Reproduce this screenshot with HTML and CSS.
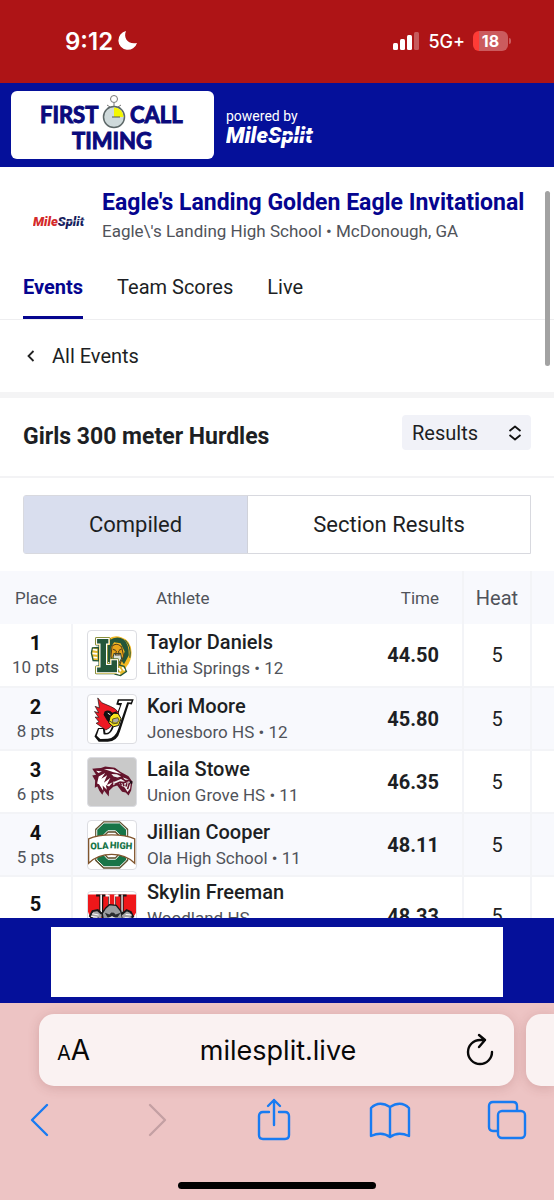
FILE: index.html
```html
<!DOCTYPE html>
<html lang="en">
<head>
    <meta charset="UTF-8">
    <meta name="viewport" content="width=device-width, initial-scale=1.0">
    <title>Eagle's Landing Golden Eagle Invitational</title>
    <link rel="stylesheet" href="styles.css">
</head>
<body>
    <div class="status-bar">
        <div class="status-left">
            <span class="clock">9:12</span>
            <svg width="20" height="20" viewBox="0 0 20 20"><path d="M8 0C5 7 10 14 19 12A9.500 9.500 0 1 1 8 0Z" fill="#fff"/></svg>
        </div>
        <div class="status-right">
            <svg width="27" height="20" viewBox="0 0 27 20" fill="#fff">
                <rect x="0" y="12" width="5" height="7" rx="1.500"/>
                <rect x="7" y="8" width="5" height="11" rx="1.500"/>
                <rect x="14" y="4" width="5" height="15" rx="1.500"/>
                <rect x="21" y="1" width="5" height="18" rx="1.500" opacity=".3"/>
            </svg>
            <span class="network">5G+</span>
            <span class="battery">18</span>
        </div>
    </div>

    <header class="site-header">
        <div class="timer-logo">
            <svg width="150" height="60" viewBox="0 0 150 60">
                <g class="timer-text">
                    <text x="2" y="28">FIRST</text>
                    <text x="92" y="28">CALL</text>
                    <text x="34" y="54">TIMING</text>
                </g>
                <g fill="none" stroke="#777" stroke-width="1">
                    <circle cx="76" cy="4" r="3.500"/>
                    <path d="M76 8v4M70 12l2 3M82 12l-2 3M69 10l3 2M83 10l-3 2"/>
                </g>
                <circle cx="76" cy="22" r="10.500" fill="#cfdadb" stroke="#5d6868" stroke-width="1.500"/>
                <path d="M76 22V12.500A9.500 9.500 0 0 1 85.500 22Z" fill="#f4f700"/>
                <path d="M74 22h8" stroke="#555" stroke-width="1"/>
            </svg>
        </div>
        <div class="powered">
            <span>powered by</span>
            <svg width="96" height="26" viewBox="0 0 96 26">
                <text class="ms-text" x="0" y="18">MileSplit</text>
                <path d="M40 12L88 10" stroke="#05109a" stroke-width="1.500"/>
            </svg>
        </div>
    </header>

    <main class="content">
        <div class="meet">
            <svg class="meet-logo" width="55" height="24" viewBox="0 0 55 24">
                <text class="ms-small" x="0" y="17"><tspan fill="#d42a2a">Mile</tspan><tspan fill="#141c5c">Split</tspan></text>
                <path d="M26 13L53 11" stroke="#fff" stroke-width=".7"/>
            </svg>
            <div>
                <h1>Eagle's Landing Golden Eagle Invitational</h1>
                <p>Eagle\'s Landing High School • McDonough, GA</p>
            </div>
        </div>

        <nav class="tabs">
            <a class="active" href="#events">Events</a>
            <a href="#scores">Team Scores</a>
            <a href="#live">Live</a>
        </nav>

        <a class="all-events" href="#events">
            <svg width="8" height="14" viewBox="0 0 8 14"><path d="M6.500 2L1.500 7l5 5" fill="none" stroke="#222" stroke-width="1.800"/></svg>
            All Events
        </a>

        <div class="event-head">
            <h2>Girls 300 meter Hurdles</h2>
            <div class="select-box">
                <select aria-label="View">
                    <option>Results</option>
                </select>
                <svg width="14" height="16" viewBox="0 0 14 16"><path d="M1.500 6L7 1.500 12.500 6M1.500 10L7 14.500 12.500 10" fill="none" stroke="#111" stroke-width="1.800" stroke-linejoin="round"/></svg>
            </div>
        </div>

        <div class="segmented">
            <button type="button" class="selected">Compiled</button>
            <button type="button">Section Results</button>
        </div>

        <table class="results">
            <colgroup>
                <col class="col-place">
                <col>
                <col class="col-time">
                <col class="col-heat">
                <col class="col-more">
            </colgroup>
            <thead>
                <tr>
                    <th>Place</th>
                    <th class="athlete-head">Athlete</th>
                    <th class="time-head">Time</th>
                    <th class="heat-head">Heat</th>
                    <th></th>
                </tr>
            </thead>
            <tbody>
                <tr>
                    <td class="place"><b>1</b><span>10 pts</span></td>
                    <td>
                        <div class="athlete">
                            <svg class="team-logo" viewBox="6 0 140 140">
                                <path d="M64 24Q82 10 103 18Q132 26 133 62Q133 88 118 104L112 120L88 128L76 112Z" fill="#f5b922"/>
                                <path d="M68 27Q91 12 111 25Q126 40 125 71L111 97L104 87L113 60L101 36L82 33L73 48L71 92L62 90V36Z" fill="#24563a"/>
                                <path d="M115 27Q133 46 128 78" fill="none" stroke="#24563a" stroke-width="3"/>
                                <path d="M76 44Q90 32 104 46L110 73L98 99H80L73 74Z" fill="#e9a51b" stroke="#59401b" stroke-width="3"/>
                                <path d="M82 66H101L104 80L96 94L84 91L79 76Z" fill="#dce1d7" stroke="#384a32" stroke-width="3"/>
                                <path d="M79 53L87 57M104 52L96 57M89 58L86 70H97L95 58" fill="none" stroke="#59401b" stroke-width="3"/>
                                <path d="M36 48L19 49L16 64L21 86L37 87ZM76 112L93 98L111 103L118 118L101 130L85 126Z" fill="#e7b92b" stroke="#24563a" stroke-width="4"/>
                                <path d="M31 22H67V38H60V98H73V84H92V122H31V105H41V38H31Z" fill="#24563a" stroke="#24563a" stroke-width="9" stroke-linejoin="round"/>
                                <path d="M31 22H67V38H60V98H73V84H92V122H31V105H41V38H31Z" fill="#24563a" stroke="#f4c93c" stroke-width="6"/>
                                <path d="M31 22H67V38H60V98H73V84H92V122H31V105H41V38H31Z" fill="#24563a" stroke="#fff" stroke-width="3"/>
                                <path d="M20 54l13 2M19 65l14 2M22 77l11 1M95 108l7 9M106 106l7 9M90 122l10 3" stroke="#fff" stroke-width="5"/>
                            </svg>
                            <div class="info"><strong>Taylor Daniels</strong><span>Lithia Springs • 12</span></div>
                        </div>
                    </td>
                    <td class="time">44.50</td>
                    <td class="heat">5</td>
                    <td></td>
                </tr>
                <tr>
                    <td class="place"><b>2</b><span>8 pts</span></td>
                    <td>
                        <div class="athlete">
                            <svg class="team-logo" viewBox="0 0 148 148">
                                <path d="M92 13H141L135 29L126 28L99 111Q91 143 61 144H33L20 128L31 102H51L54 117Q66 118 71 104L99 32L87 29Z" fill="#111"/>
                                <path d="M96 18H135L132 23L121 22L93 105Q84 133 61 135L38 136L27 126L34 105H46L48 121Q68 126 77 104L105 25L94 25Z" fill="#fff"/>
                                <path d="M30 9L43 24L69 35Q87 42 94 55L92 77L65 102L55 108L42 99L25 87L34 83L22 68L33 69L20 51L33 55L22 35L35 40Z" fill="#ed1923" stroke="#111" stroke-width="2"/>
                                <path d="M51 51Q65 43 75 55L88 50L91 65L79 76L70 90L58 78L48 61Z" fill="#111"/>
                                <path d="M68 67L80 56L93 57L102 73L94 94L78 98L64 86Z" fill="#f7e31d" stroke="#111" stroke-width="3"/>
                                <path d="M76 74l16-4 4 9-9 8-11-1zM67 80l12 9 14-3" fill="#aaa" stroke="#615a17" stroke-width="3"/>
                                <path d="M61 56l8 5" stroke="#fff" stroke-width="3"/>
                            </svg>
                            <div class="info"><strong>Kori Moore</strong><span>Jonesboro HS • 12</span></div>
                        </div>
                    </td>
                    <td class="time">45.80</td>
                    <td class="heat">5</td>
                    <td></td>
                </tr>
                <tr>
                    <td class="place"><b>3</b><span>6 pts</span></td>
                    <td>
                        <div class="athlete">
                            <svg class="team-logo gray" viewBox="0 0 148 148">
                                <path d="M13 33Q28 32 40 31L53 26L83 30L101 43L125 56L137 73L133 100L125 116L116 106L105 104L90 85L78 89L65 101L64 119L50 101L44 113L35 101L29 88L21 92L22 69L13 54L25 52Z" fill="#64142c"/>
                                <path d="M25 39L43 42L32 46ZM49 34L78 35L103 49L79 44ZM33 57L53 46L41 64L59 53L49 76L69 61L58 83L76 75L65 88L55 83L58 98L45 85L47 101L34 81L28 79Z" fill="#fff"/>
                                <path d="M72 49L89 50L102 57L91 60L79 57ZM108 60L126 66L113 68ZM78 73L98 62L115 69L132 74L130 94L122 105L113 91L101 85L95 77L78 84Z" fill="#eee"/>
                                <path d="M80 71L102 62L120 73L110 76L99 74L82 82M99 76L103 85M108 77L111 87M120 78L117 88M128 76L122 96" fill="none" stroke="#64142c" stroke-width="5"/>
                                <path d="M129 69l8 3-1 9-7-3z" fill="#210b15"/>
                            </svg>
                            <div class="info"><strong>Laila Stowe</strong><span>Union Grove HS • 11</span></div>
                        </div>
                    </td>
                    <td class="time">46.35</td>
                    <td class="heat">5</td>
                    <td></td>
                </tr>
                <tr>
                    <td class="place"><b>4</b><span>5 pts</span></td>
                    <td>
                        <div class="athlete">
                            <svg class="team-logo" viewBox="0 0 148 148">
                                <path fill-rule="evenodd" d="M49 4H97L121 26V121L97 144H49L25 121V26ZM61 33L50 44V102L61 115H85L96 102V44L85 33Z" fill="#187548" stroke="#5f502e" stroke-width="6"/>
                                <path fill-rule="evenodd" d="M49 6H97L119 27V120L97 141H49L27 120V27ZM61 30L48 43V104L61 118H85L98 104V43L85 30Z" fill="#187548" stroke="#fff" stroke-width="3"/>
                                <path d="M2 55Q28 43 73 43Q118 43 144 55V130Q116 103 73 103Q30 103 2 130Z" fill="#fff" stroke="#80552d" stroke-width="4"/>
                                <text class="ola-text" x="8" y="88" transform="rotate(-3 8 88)">OLA</text>
                                <text class="ola-text" x="67" y="84" transform="rotate(3 67 84)">HIGH</text>
                            </svg>
                            <div class="info"><strong>Jillian Cooper</strong><span>Ola High School • 11</span></div>
                        </div>
                    </td>
                    <td class="time">48.11</td>
                    <td class="heat">5</td>
                    <td></td>
                </tr>
                <tr class="tall">
                    <td class="place"><b>5</b><span></span></td>
                    <td>
                        <div class="athlete">
                            <svg class="team-logo" viewBox="0 0 148 148">
                                <path d="M0 8H148V64L132 90L110 120H33L12 91L0 61Z" fill="#ef171a"/>
                                <path d="M25 8H54V14H47V56H62V8H86V56H100V14H93V8H119V14H110V66L97 86H48L35 68V14H25Z" fill="#151515"/>
                                <path d="M38 8H43V64L38 60ZM54 8H94V14H84V44H64V14H54ZM103 8H107V60L103 64Z" fill="#fff"/>
                                <path d="M67 8H81V44H67Z" fill="#ef171a"/>
                                <path d="M54 50L66 39L87 41L101 59L107 83L96 112L62 113L48 91L44 66Z" fill="#9a9d9f" stroke="#17191b" stroke-width="4"/>
                                <path d="M52 64L66 69L72 63L80 64L85 69L101 64L91 78H60Z" fill="#292c2e"/>
                                <path d="M60 82L74 74L91 84L95 100L75 90L58 101Z" fill="#ddd"/>
                                <path d="M43 68L30 56L14 59L6 74L16 84L31 82L37 96M104 69L119 56L132 62L139 76L124 83L110 96" fill="#a5a5a5" stroke="#17191b" stroke-width="6"/>
                                <path d="M13 67l20 4M9 75l20 3M116 69l19 2M113 79l21 1" stroke="#fff" stroke-width="3"/>
                            </svg>
                            <div class="info"><strong>Skylin Freeman</strong><span>Woodland HS</span></div>
                        </div>
                    </td>
                    <td class="time">48.33</td>
                    <td class="heat">5</td>
                    <td></td>
                </tr>
            </tbody>
        </table>
        <div class="scroll-thumb"></div>
    </main>

    <footer class="ad-bar"><div class="ad"></div></footer>

    <div class="browser">
        <div class="address-row">
            <div class="address">
                <button type="button" class="text-size" aria-label="Text size"><small>A</small>A</button>
                <input type="text" value="milesplit.live" aria-label="Address">
                <button type="button" aria-label="Reload">
                    <svg width="28" height="34" viewBox="0 0 28 34" fill="none" stroke="#080808" stroke-width="2.400" stroke-linecap="round" stroke-linejoin="round"><path d="M26 19A12 12 0 1 1 14 7H19M13 2l6 5-6 7"/></svg>
                </button>
            </div>
            <div class="next-tab"></div>
        </div>
        <div class="tools">
            <button type="button" aria-label="Back"><svg width="20" height="42" viewBox="0 0 20 42"><path d="M17 6L2 21l15 15"/></svg></button>
            <button type="button" class="disabled" aria-label="Forward" disabled><svg width="20" height="42" viewBox="0 0 20 42"><path d="M3 6l15 15L3 36"/></svg></button>
            <button type="button" aria-label="Share"><svg width="34" height="44" viewBox="0 0 34 44"><path d="M12 14H6Q2 14 2 18V37Q2 41 6 41H28Q32 41 32 37V18Q32 14 28 14H22M17 27V2M11 8l6-6 6 6"/></svg></button>
            <button type="button" aria-label="Bookmarks"><svg width="42" height="38" viewBox="0 0 42 38"><path d="M21 36Q13 30 2 35V7Q10-1 21 6Q32-1 40 7V35Q29 30 21 36V6"/></svg></button>
            <button type="button" aria-label="Tabs"><svg width="40" height="40" viewBox="0 0 40 40"><path d="M10 31H6Q2 31 2 27V6Q2 2 6 2H26Q30 2 30 6V10"/><rect x="11" y="11" width="27" height="27" rx="4"/></svg></button>
        </div>
        <div class="home-indicator"></div>
    </div>
</body>
</html>
```

FILE: styles.css
```css
* {
    box-sizing: border-box;
}

body {
    margin: 0;
    height: 100vh;
    display: flex;
    flex-direction: column;
    overflow: hidden;
    font-family: Roboto, "Liberation Sans", sans-serif;
    color: #1d1f24;
    background-color: #fff;
}

h1, h2, p {
    margin: 0;
}

a {
    color: inherit;
    text-decoration: none;
}

svg {
    display: block;
    flex: none;
}

button {
    padding: 0;
    border: none;
    background: none;
    color: inherit;
    font-family: inherit;
}

/* Phone status bar */
.status-bar {
    display: flex;
    flex: none;
    justify-content: space-between;
    padding: 26px 46px 27px 65px;
    background-color: #ae1416;
    color: #fff;
    font-family: Inter, sans-serif;
}

.status-left,
.status-right {
    display: flex;
    align-items: center;
    height: 30px;
}

.status-left {
    gap: 5px;
}

.status-right {
    gap: 8px;
}

.clock {
    font-size: 24px;
    font-weight: 600;
}

.network {
    font-size: 18px;
    font-weight: 500;
}

.battery {
    position: relative;
    width: 35px;
    border-radius: 6px;
    background: linear-gradient(90deg, #ff3b36 6px, #cb5b5e 6px);
    font-size: 16px;
    font-weight: 700;
    line-height: 20px;
    text-align: center;
}

.battery::after {
    content: "";
    position: absolute;
    top: 7px;
    right: -3px;
    width: 2px;
    height: 6px;
    border-radius: 0 2px 2px 0;
    background-color: #cb5b5e;
}

/* Site header */
.site-header {
    display: flex;
    flex: none;
    align-items: center;
    gap: 12px;
    height: 84px;
    padding-left: 11px;
    background-color: #05109a;
    color: #fff;
}

.timer-logo {
    display: flex;
    justify-content: center;
    width: 203px;
    padding: 4px 0;
    border-radius: 6px;
    background-color: #fff;
}

.timer-text {
    font-family: Lato, sans-serif;
    font-size: 22px;
    font-weight: 700;
    fill: #0a0a7c;
    stroke: #0a0a7c;
    stroke-width: 1px;
}

.powered {
    padding-top: 8px;
    font-size: 14px;
    line-height: 18px;
}

.ms-text {
    font-size: 22px;
    font-style: italic;
    font-weight: 900;
    fill: #fff;
}

.ms-small {
    font-size: 13px;
    font-style: italic;
    font-weight: 900;
}

/* Meet */
.content {
    position: relative;
    flex: 1;
    min-height: 0;
    overflow: hidden;
}

.meet {
    display: flex;
    align-items: center;
    gap: 14px;
    padding: 20px 10px 0 33px;
}

.meet-logo {
    margin-top: 12px;
}

h1 {
    color: #05058f;
    font-size: 23px;
    line-height: 32px;
    white-space: nowrap;
}

.meet p {
    color: #50535a;
    font-size: 17px;
    line-height: 24px;
}

.tabs {
    display: flex;
    gap: 34px;
    padding: 15px 23px 0;
    border-bottom: 1px solid #eeeef0;
    font-size: 20px;
    line-height: 58px;
}

.tabs .active {
    border-bottom: 3px solid #05058f;
    color: #05058f;
    font-weight: 700;
}

.all-events {
    display: flex;
    align-items: center;
    gap: 17px;
    padding: 0 27px;
    border-bottom: 6px solid #f4f4f5;
    font-size: 20px;
    line-height: 72px;
}

.event-head {
    display: flex;
    justify-content: space-between;
    padding: 17px 23px;
    border-bottom: 2px solid #f3f3f5;
}

h2 {
    font-size: 23px;
    line-height: 44px;
}

.select-box {
    display: grid;
    align-items: center;
    width: 129px;
    height: 35px;
}

.select-box select,
.select-box svg {
    grid-area: 1 / 1;
}

.select-box select {
    appearance: none;
    width: 100%;
    height: 100%;
    padding: 0 10px;
    border: none;
    border-radius: 4px;
    background-color: #f1f2f8;
    color: #1d1f24;
    font-family: inherit;
    font-size: 20px;
}

.select-box svg {
    justify-self: end;
    margin-right: 9px;
    pointer-events: none;
}

.segmented {
    display: grid;
    grid-template-columns: 225fr 283fr;
    margin: 17px 23px;
    border: 1px solid #d8d9df;
    border-radius: 3px 0 0 3px;
}

.segmented button {
    font-size: 22px;
    line-height: 57px;
}

.segmented .selected {
    border-right: 1px solid #d0d2da;
    background-color: #d9deee;
}

/* Results table */
.results {
    width: 100%;
    border-collapse: collapse;
    table-layout: fixed;
}

.col-place {
    width: 72px;
}

.col-time {
    width: 100px;
}

.col-heat {
    width: 68px;
}

.col-more {
    width: 23px;
}

.results th {
    height: 53px;
    padding: 0;
    color: #50535a;
    font-size: 17px;
    font-weight: 400;
}

.results .athlete-head {
    padding-left: 84px;
    text-align: left;
}

.results .time-head {
    padding-right: 23px;
    text-align: right;
}

.results .heat-head {
    border-right: 2px solid #f3f4f7;
    border-left: 2px solid #f3f4f7;
    font-size: 20px;
}

.results thead {
    background-color: #f8f9fd;
}

.results td {
    height: 63px;
    padding: 0;
    border-bottom: 2px solid #f3f4f7;
}

.results .tall td {
    height: 80px;
}

.results tbody tr:nth-child(even) {
    background-color: #f8f9fd;
}

.results .place,
.results .heat {
    border-right: 2px solid #f3f4f7;
    text-align: center;
}

.results .heat {
    border-left: 2px solid #f3f4f7;
    font-size: 20px;
}

.place b,
.place span {
    display: block;
    min-height: 24px;
    line-height: 24px;
}

.place b {
    color: #111;
    font-size: 20px;
}

.place span {
    color: #50535a;
    font-size: 17px;
}

.athlete {
    display: flex;
    align-items: center;
    gap: 10px;
    padding-left: 14px;
}

.team-logo {
    width: 50px;
    height: 50px;
    border: 1px solid #dcdde2;
    border-radius: 4px;
    background-color: #fff;
}

.team-logo.gray {
    background-color: #c9c9c9;
}

.ola-text {
    font-size: 29px;
    font-weight: 900;
    fill: #187548;
}

.info strong,
.info span {
    display: block;
    line-height: 26px;
}

.info strong {
    font-size: 20px;
    font-weight: 500;
}

.info span {
    color: #50535a;
    font-size: 17px;
}

.tall .info span {
    min-height: 48px;
}

.results .time {
    padding-right: 23px;
    font-size: 20px;
    font-weight: 700;
    text-align: right;
}

.scroll-thumb {
    position: absolute;
    top: 24px;
    right: 4px;
    width: 5px;
    height: 175px;
    border-radius: 3px;
    background-color: #a2a2a2;
}

.ad-bar {
    flex: none;
    padding: 9px 51px 6px;
    background-color: #05109a;
}

.ad {
    height: 70px;
    background-color: #fff;
}

/* Browser controls */
.browser {
    flex: none;
    padding: 11px 0;
    background-color: #edc4c4;
    font-family: Inter, sans-serif;
}

.address-row {
    display: flex;
    gap: 12px;
    padding-left: 39px;
}

.address,
.next-tab {
    height: 72px;
    border-radius: 15px;
    background-color: #faf2f2;
    box-shadow: 0 2px 12px rgba(120, 50, 50, 0.2);
}

.address {
    display: flex;
    flex: 1;
    align-items: center;
    min-width: 0;
    padding: 0 20px 0 18px;
    color: #080808;
}

.address input {
    flex: 1;
    width: 100%;
    min-width: 0;
    border: none;
    background: none;
    color: #080808;
    font-family: inherit;
    font-size: 27px;
    text-align: center;
}

.next-tab {
    flex: none;
    width: 28px;
    border-radius: 15px 0 0 15px;
}

.text-size {
    font-size: 28px;
}

.text-size small {
    font-size: 20px;
}

.tools {
    display: flex;
    align-items: center;
    justify-content: space-between;
    height: 68px;
    padding: 0 26px 0 19px;
}

.tools button {
    display: flex;
    justify-content: center;
    width: 42px;
}

.tools svg {
    fill: none;
    stroke: #187bf2;
    stroke-width: 2.4px;
    stroke-linecap: round;
    stroke-linejoin: round;
}

.tools .disabled svg {
    stroke: #c4a0a3;
}

.home-indicator {
    width: 198px;
    height: 7px;
    margin: 28px auto 0;
    border-radius: 4px;
    background-color: #000;
}
```
